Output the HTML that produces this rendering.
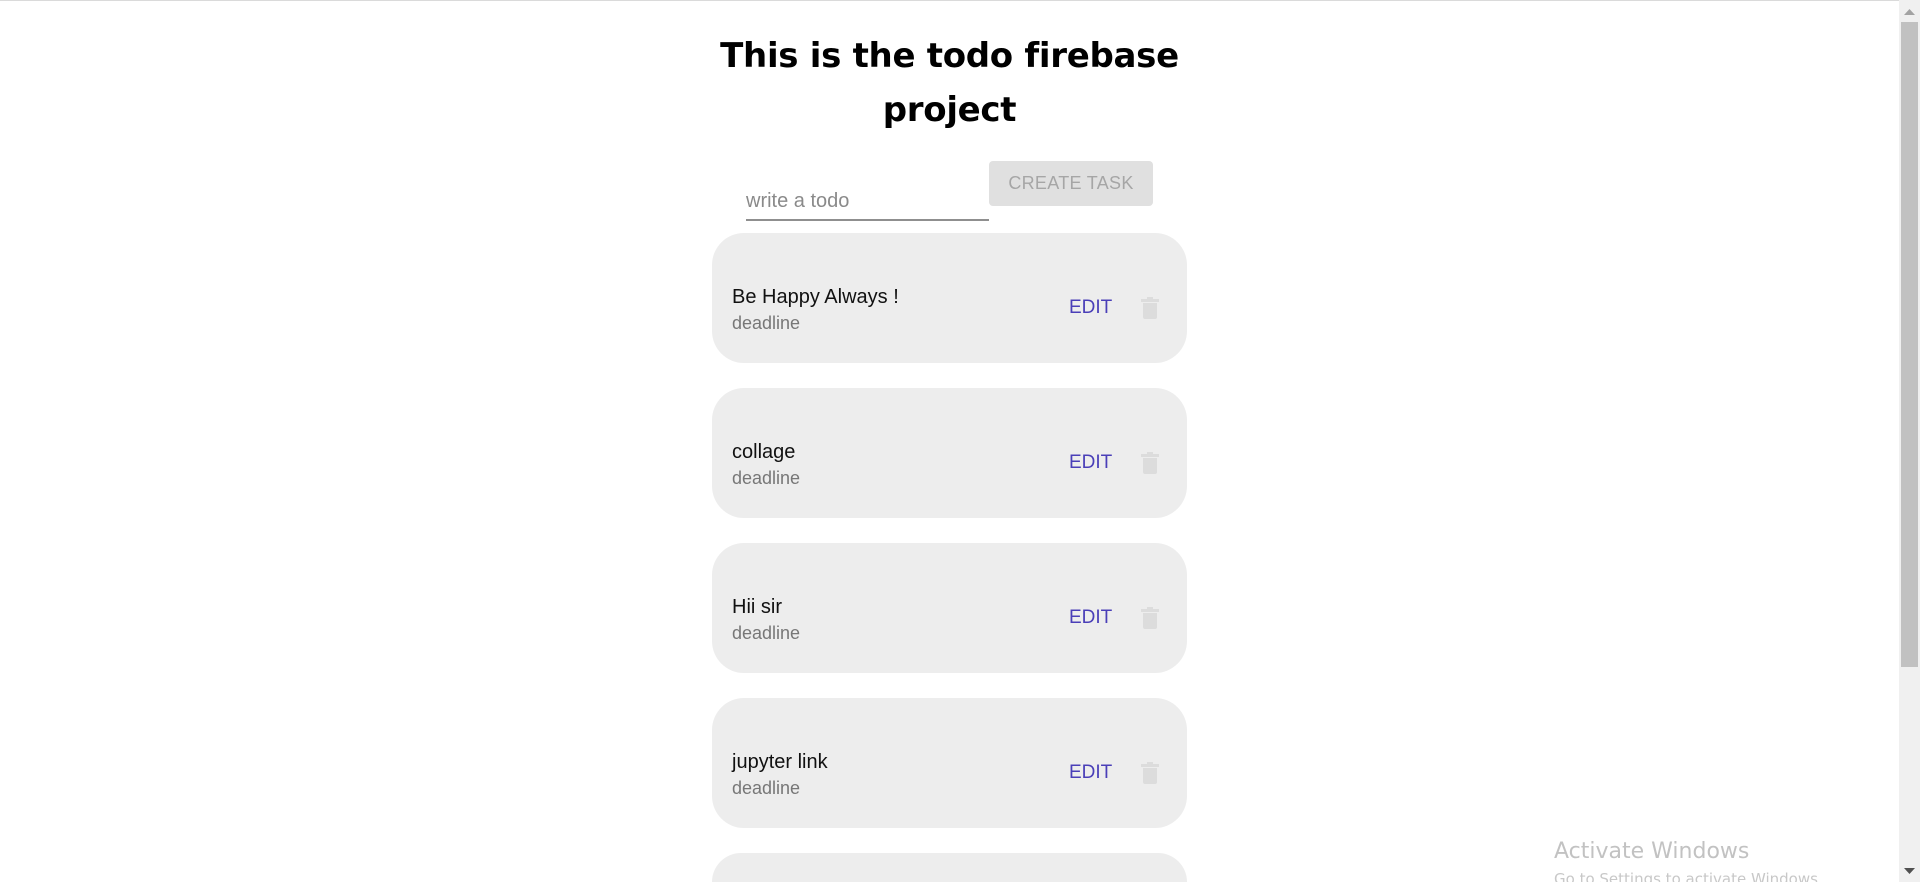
<!DOCTYPE html>
<html><head><meta charset="utf-8"><style>
html,body{margin:0;padding:0;width:1920px;height:882px;overflow:hidden;background:#fff;font-family:"Liberation Sans",Arial,sans-serif;position:relative}
.topline{position:absolute;left:0;top:0;width:1899px;height:1px;background:#dadada}
h1{position:absolute;left:0;width:1899px;top:29px;margin:0;text-align:center;font-family:"DejaVu Sans","Liberation Sans",sans-serif;font-weight:bold;font-size:34px;line-height:54px;letter-spacing:-0.3px;color:#000}
.ph{position:absolute;left:746px;top:190px;font-size:20px;color:#8a8a8a}
.ul{position:absolute;left:746px;top:219px;width:243px;height:2px;background:#8f8f8f}
.btn{position:absolute;left:989px;top:161px;width:164px;height:45px;background:#e0e0e0;border-radius:4px;color:#a6a6a6;font-size:18px;line-height:45px;text-align:center;letter-spacing:.3px}
.card{position:absolute;left:712px;width:475px;height:130px;background:#ededed;border-radius:32px}
.t{position:absolute;left:20px;top:52px;font-size:20px;color:#111;line-height:24px}
.d{position:absolute;left:20px;top:79px;font-size:18px;color:#777;line-height:22px}
.e{position:absolute;left:357px;top:63px;font-size:19px;color:#4a3fb8;line-height:24px;letter-spacing:0}
.tr{position:absolute;left:428px;top:63px}
.sb{position:absolute;left:1899px;top:0;width:21px;height:882px;background:#f0f0f0}
.th{position:absolute;left:1901px;top:22px;width:17px;height:645px;background:#c1c1c1}
.aw{position:absolute;left:1554px;top:839px;font-family:"DejaVu Sans",sans-serif;font-size:22px;color:#c2c2c2}
.aw2{position:absolute;left:1554px;top:870px;font-family:"DejaVu Sans",sans-serif;font-size:15px;color:#c8c8c8}
</style></head><body>
<div class="topline"></div>
<h1>This is the todo firebase<br>project</h1>
<div class="ph">write a todo</div>
<div class="ul"></div>
<div class="btn">CREATE TASK</div>

<div class="card" style="top:233px"><div class="t">Be Happy Always !</div><div class="d">deadline</div><div class="e">EDIT</div>
<svg class="tr" width="20" height="24" viewBox="0 0 20 24"><path d="M1 3h18v3H1zM7 1h6v2H7zM3 7h14v14a2 2 0 0 1-2 2H5a2 2 0 0 1-2-2z" fill="#dcdcdc"/></svg></div>
<div class="card" style="top:388px"><div class="t">collage</div><div class="d">deadline</div><div class="e">EDIT</div>
<svg class="tr" width="20" height="24" viewBox="0 0 20 24"><path d="M1 3h18v3H1zM7 1h6v2H7zM3 7h14v14a2 2 0 0 1-2 2H5a2 2 0 0 1-2-2z" fill="#dcdcdc"/></svg></div>
<div class="card" style="top:543px"><div class="t">Hii sir</div><div class="d">deadline</div><div class="e">EDIT</div>
<svg class="tr" width="20" height="24" viewBox="0 0 20 24"><path d="M1 3h18v3H1zM7 1h6v2H7zM3 7h14v14a2 2 0 0 1-2 2H5a2 2 0 0 1-2-2z" fill="#dcdcdc"/></svg></div>
<div class="card" style="top:698px"><div class="t">jupyter link</div><div class="d">deadline</div><div class="e">EDIT</div>
<svg class="tr" width="20" height="24" viewBox="0 0 20 24"><path d="M1 3h18v3H1zM7 1h6v2H7zM3 7h14v14a2 2 0 0 1-2 2H5a2 2 0 0 1-2-2z" fill="#dcdcdc"/></svg></div>
<div class="card" style="top:853px;height:29px;border-radius:32px 32px 0 0"></div>

<div class="aw">Activate Windows</div>
<div class="aw2">Go to Settings to activate Windows.</div>
<div class="sb"></div>
<div class="th"></div>
<svg style="position:absolute;left:1904px;top:9px" width="11" height="6"><path d="M0 6L5.5 0L11 6z" fill="#a3a3a3"/></svg>
<svg style="position:absolute;left:1904px;top:868px" width="11" height="6"><path d="M0 0L5.5 6L11 0z" fill="#505050"/></svg>
</body></html>
